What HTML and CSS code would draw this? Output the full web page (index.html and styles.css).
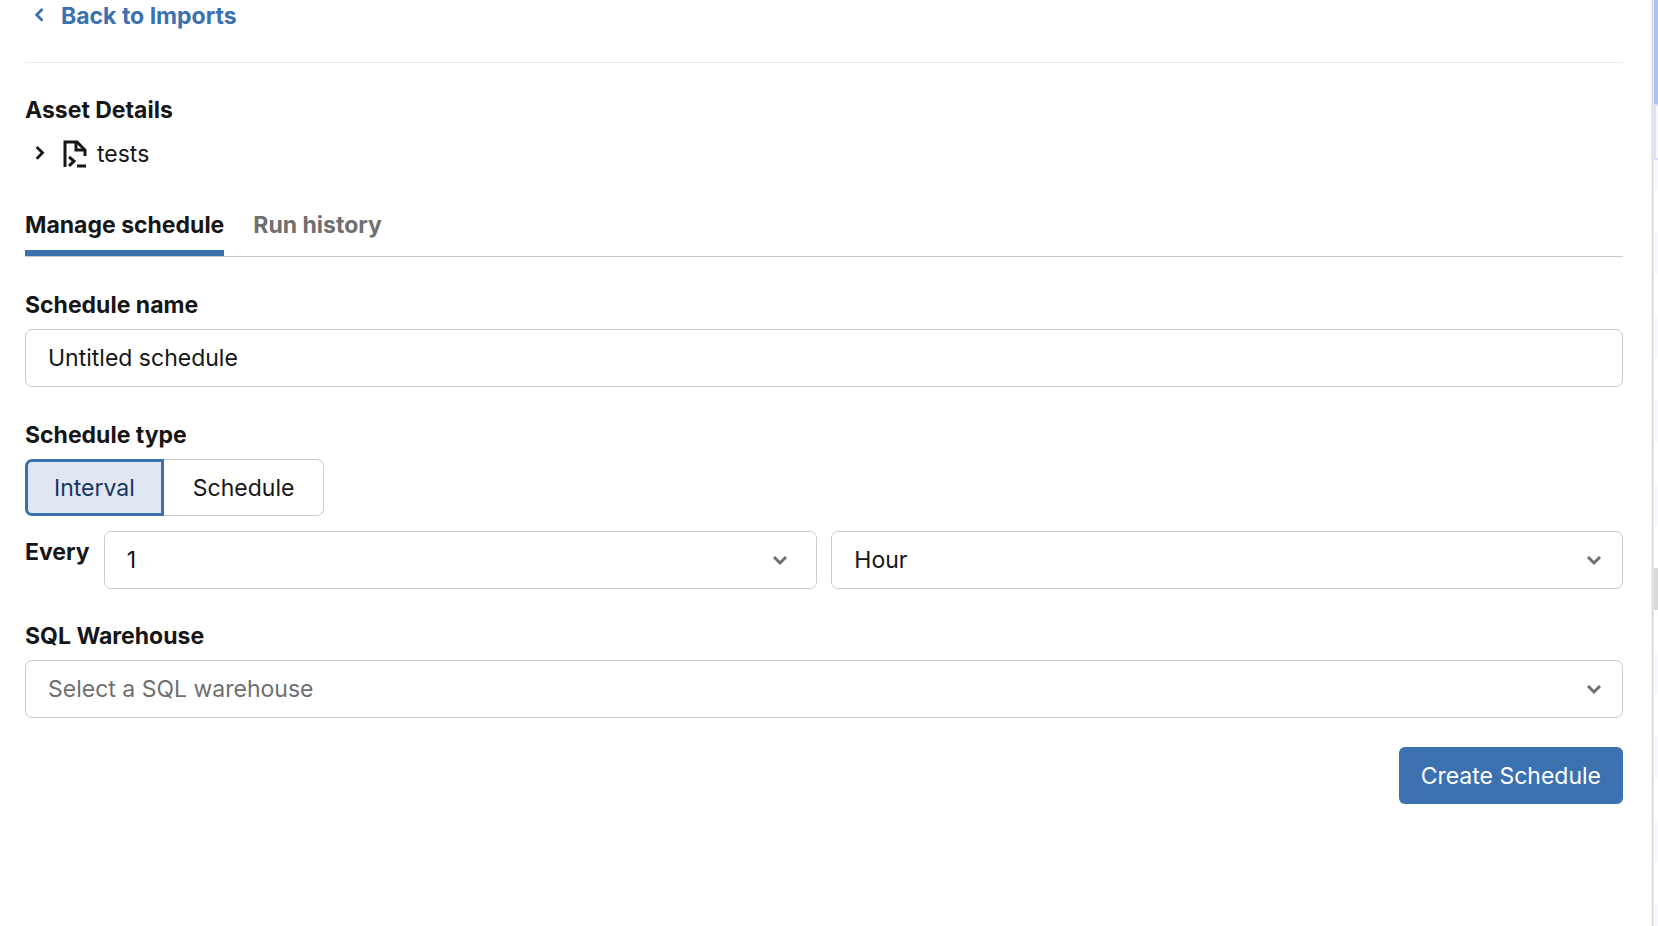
FILE: index.html
```html
<!DOCTYPE html>
<html lang="en">
  <head>
    <meta charset="utf-8" />
    <meta name="viewport" content="width=device-width, initial-scale=1" />
    <title>Schedule import</title>
    <link rel="stylesheet" href="styles.css">
  </head>
  <body>
    <div class="layout">
      <main class="panel">
        <!-- Header -->
        <header class="panel-header">
          <a class="back-link" href="#imports">
            <svg class="icon" viewBox="0 0 24 24" aria-hidden="true">
              <path d="M15 6 L10 11 L15 16" />
            </svg>
            Back to Imports
          </a>
        </header>

        <!-- Asset -->
        <section class="asset">
          <h2 class="heading">Asset Details</h2>
          <button class="asset-row" type="button" aria-expanded="false">
            <svg class="icon" viewBox="0 0 24 24" aria-hidden="true">
              <path d="M10 6 L15 11 L10 16" />
            </svg>
            <svg class="icon-file" viewBox="0 0 24 28" aria-hidden="true">
              <path d="M2 27 V2 H14 L22 10 V16" />
              <path d="M13 2 V10 H22" />
              <path d="M6 17 L11 21 L6 26" />
              <path d="M14 26 H23" />
            </svg>
            tests
          </button>
        </section>

        <!-- Tabs -->
        <div class="tabs" role="tablist">
          <button class="tab tab-active" type="button" role="tab" aria-selected="true">Manage schedule</button>
          <button class="tab" type="button" role="tab" aria-selected="false">Run history</button>
        </div>

        <!-- Schedule form -->
        <form class="form">
          <div class="field">
            <label class="heading" for="schedule-name">Schedule name</label>
            <input class="control" id="schedule-name" type="text" value="Untitled schedule">
          </div>

          <fieldset class="field field-type">
            <legend class="heading">Schedule type</legend>
            <div class="segmented">
              <label class="segment">
                <input class="segment-input" type="radio" name="type" value="interval" checked>
                <span class="segment-text">Interval</span>
              </label>
              <label class="segment">
                <input class="segment-input" type="radio" name="type" value="schedule">
                <span class="segment-text">Schedule</span>
              </label>
            </div>
          </fieldset>

          <div class="every">
            <label class="heading every-label" for="every-count">Every</label>
            <div class="select every-count">
              <select class="control" id="every-count">
                <option>1</option>
                <option>2</option>
                <option>3</option>
              </select>
              <svg class="icon select-arrow" viewBox="0 0 24 24" aria-hidden="true">
                <path d="M6 9 L12 15 L18 9" />
              </svg>
            </div>
            <div class="select every-unit">
              <select class="control" aria-label="Unit">
                <option>Hour</option>
                <option>Day</option>
                <option>Week</option>
              </select>
              <svg class="icon select-arrow" viewBox="0 0 24 24" aria-hidden="true">
                <path d="M6 9 L12 15 L18 9" />
              </svg>
            </div>
          </div>

          <div class="field field-warehouse">
            <label class="heading" for="warehouse">SQL Warehouse</label>
            <div class="select">
              <select class="control control-empty" id="warehouse">
                <option>Select a SQL warehouse</option>
              </select>
              <svg class="icon select-arrow" viewBox="0 0 24 24" aria-hidden="true">
                <path d="M6 9 L12 15 L18 9" />
              </svg>
            </div>
          </div>

          <div class="actions">
            <button class="btn-primary" type="submit">Create Schedule</button>
          </div>
        </form>
      </main>

      <!-- Edge of the sheet behind the panel -->
      <aside class="sheet" aria-hidden="true">
        <div class="sheet-head"></div>
        <div class="sheet-cell"></div>
        <div class="sheet-rows">
          <div class="sheet-thumb"></div>
        </div>
      </aside>
    </div>
  </body>
</html>
```
FILE: styles.css
```css
* {
  box-sizing: border-box;
}

body {
  margin: 0;
  background: #fff;
  color: #161616;
  font-family: Inter, "Liberation Sans", sans-serif;
  font-size: 23px;
  line-height: 32px;
}

button,
input,
select {
  font: inherit;
  color: inherit;
}

.layout {
  display: flex;
  min-height: 100vh;
}

.panel {
  flex: 1;
  padding: 0 29px 0 25px;
  border-right: 1px solid #dadada;
  box-shadow: inset -1px 0 #f0f0f0;
}

/* Header */
.panel-header {
  display: flex;
  padding-bottom: 30px;
  border-bottom: 1px solid #ebebeb;
}

.back-link {
  display: flex;
  align-items: center;
  gap: 8px;
  color: #3c71af;
  font-weight: 650;
  text-decoration: none;
}

.icon {
  width: 28px;
  height: 28px;
  fill: none;
  stroke: currentColor;
  stroke-width: 2.4;
}

.icon-file {
  width: 24px;
  height: 28px;
  fill: none;
  stroke: currentColor;
  stroke-width: 3;
}

/* Asset */
.asset {
  padding-top: 31px;
}

.heading {
  display: block;
  margin: 0;
  padding: 0;
  font-size: 23px;
  font-weight: 650;
}

.asset-row {
  display: flex;
  align-items: center;
  gap: 10px;
  margin-top: 12px;
  padding: 0;
  border: 0;
  background: none;
}

/* Tabs */
.tabs {
  display: flex;
  gap: 29px;
  margin-top: 39px;
  border-bottom: 1px solid #cbcbcb;
}

.tab {
  padding: 0 0 9px;
  border: 0;
  border-bottom: 6px solid transparent;
  background: none;
  color: #6f6f6f;
  font-weight: 650;
}

.tab-active {
  border-bottom-color: #3c71af;
  color: #161616;
}

/* Form */
.form {
  padding-top: 32px;
}

.field {
  min-width: 0;
  margin: 0 0 32px;
  padding: 0;
  border: 0;
}

.field .heading {
  margin-bottom: 8px;
}

.field-type {
  margin-bottom: 15px;
}

.field-warehouse {
  margin-bottom: 29px;
}

.control {
  display: block;
  width: 100%;
  height: 58px;
  padding: 0 22px;
  border: 1px solid #cbcbcb;
  border-radius: 7px;
  background: #fff;
  appearance: none;
}

.control-empty {
  color: #6f6f6f;
}

.select {
  position: relative;
}

.select-arrow {
  position: absolute;
  top: 17px;
  right: 17px;
  width: 24px;
  height: 24px;
  stroke-width: 3;
  color: #6f6f6f;
  pointer-events: none;
}

.every-count .select-arrow {
  right: 25px;
}

.segmented {
  display: flex;
}

.segment-input {
  position: absolute;
  opacity: 0;
}

.segment-text {
  display: block;
  height: 57px;
  padding: 12px 29px;
  border: 1px solid #cbcbcb;
  border-left: 0;
  border-radius: 0 7px 7px 0;
}

.segment:first-child .segment-text {
  border-left: 1px solid #cbcbcb;
  border-radius: 7px 0 0 7px;
}

.segment-input:checked + .segment-text {
  padding: 10px 26px;
  border: 3px solid #3c71af !important;
  background: #e0e7f3;
  color: #17365f;
}

.every {
  display: flex;
  gap: 14px;
  margin-bottom: 31px;
}

.every-label {
  padding-top: 5px;
}

.every-count {
  flex: 714;
}

.every-unit {
  flex: 792;
}

.actions {
  display: flex;
  justify-content: flex-end;
}

.btn-primary {
  height: 57px;
  padding: 0 22px;
  border: 0;
  border-radius: 6px;
  background: #3c71af;
  color: #fff;
}

/* Sheet edge */
.sheet {
  display: flex;
  flex-direction: column;
  width: 5px;
  border-left: 1px solid #ececec;
}

.sheet-head {
  height: 104px;
  background: #abc3f3;
}

.sheet-cell {
  height: 56px;
  border: 2px solid #d5e1fa;
  border-right: 0;
  background: #f8f9ff;
}

.sheet-rows {
  flex: 1;
  padding-top: 408px;
  background: repeating-linear-gradient(#f9f9ff 0 30px, #fff 30px 72px, #f9f9ff 72px 84px);
}

.sheet-thumb {
  height: 42px;
  background: #d9d9d9;
}
```
